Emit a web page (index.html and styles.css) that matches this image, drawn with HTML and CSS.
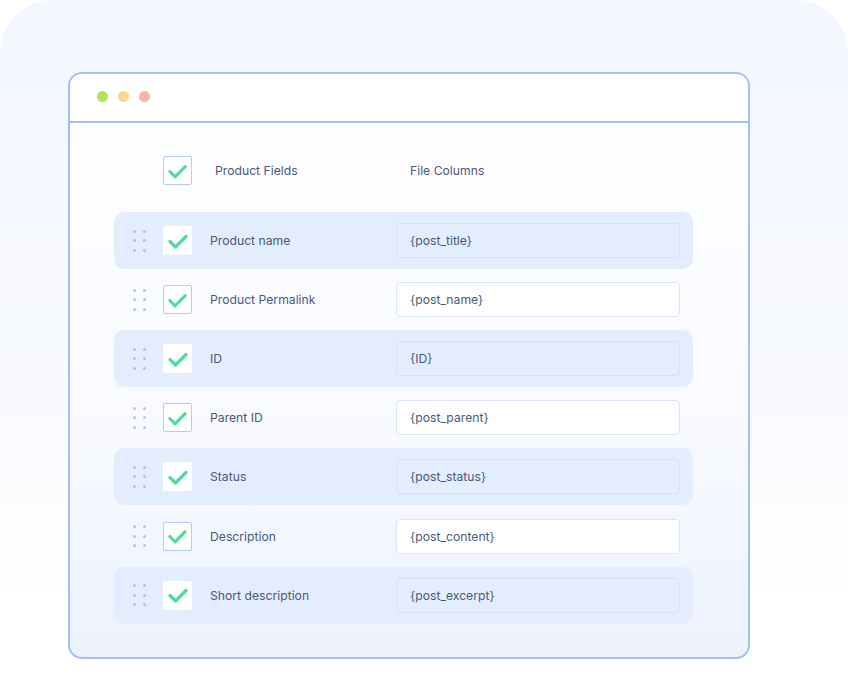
FILE: index.html
```html
<!DOCTYPE html>
<html lang="en">
<head>
    <meta charset="UTF-8">
    <meta name="viewport" content="width=device-width, initial-scale=1.0">
    <title>Field Mapping</title>
    <link rel="stylesheet" href="styles.css">
</head>
<body>

<div class="backdrop">
    <div class="window">
        <div class="titlebar">
            <span class="dot green"></span>
            <span class="dot yellow"></span>
            <span class="dot red"></span>
        </div>

        <div class="mapping">
            <div class="head-row">
                <span class="check boxed">
                    <svg viewBox="0 0 28 28"><path d="M6 14.5l5.5 5.5L22 9.5"/></svg>
                </span>
                <span class="head-label">Product Fields</span>
                <span class="head-col">File Columns</span>
            </div>

            <div class="rows" id="rows"></div>
        </div>
    </div>
</div>

<script>
    // Product fields and the file column each one maps to
    const fields = [
        ['Product name', '{post_title}'],
        ['Product Permalink', '{post_name}'],
        ['ID', '{ID}'],
        ['Parent ID', '{post_parent}'],
        ['Status', '{post_status}'],
        ['Description', '{post_content}'],
        ['Short description', '{post_excerpt}']
    ];

    const rows = document.getElementById('rows');
    fields.forEach(function(field, i) {
        const row = document.createElement('div');
        row.className = 'row' + (i % 2 === 0 ? ' shaded' : '');
        row.innerHTML = `
            <span class="grip"><i></i><i></i><i></i><i></i><i></i><i></i></span>
            <span class="check ${i % 2 === 0 ? '' : 'boxed'}">
                <svg viewBox="0 0 28 28"><path d="M6 14.5l5.5 5.5L22 9.5"/></svg>
            </span>
            <span class="field">${field[0]}</span>
            <span class="column">${field[1]}</span>
        `;
        rows.appendChild(row);
    });
</script>
</body>
</html>
```

FILE: styles.css
```css
/* Page and soft backdrop panel */
body {
    margin: 0;
    background: #fff;
    font-family: Inter, "Noto Sans", sans-serif;
    color: #4d5877;
}
.backdrop {
    width: 848px;
    height: 678px;
    padding: 72px 0 0 68px;
    box-sizing: border-box;
    border-radius: 52px 52px 0 0;
    background: linear-gradient(180deg, #f4f8fe 0%, #f7f9fe 55%, #ffffff 88%);
}

/* Browser-like window */
.window {
    width: 682px;
    height: 587px;
    box-sizing: border-box;
    border: 2px solid #a2c0f7;
    border-radius: 14px;
    overflow: hidden;
    background: linear-gradient(180deg, #ffffff 0%, #f8faff 60%, #edf2fd 100%);
}
.titlebar {
    height: 49px;
    display: flex;
    align-items: center;
    gap: 10px;
    padding: 0 0 3px 27px;
    box-sizing: border-box;
    border-bottom: 2px solid #a2c0f7;
    background: #fff;
}
.dot {
    width: 11px;
    height: 11px;
    border-radius: 50%;
}
.dot.green { background: #b3e45c; }
.dot.yellow { background: #f6d88e; }
.dot.red { background: #fbb4a6; }

/* Mapping table */
.mapping {
    padding: 33px 55px 0 44px;
}
.head-row {
    display: flex;
    align-items: center;
    height: 29px;
    font-size: 12.2px;
}
.head-row .check {
    margin-left: 49px;
}
.head-label {
    margin-left: 23px;
    width: 195px;
}
.rows {
    margin-top: 27px;
    display: flex;
    flex-direction: column;
    gap: 2px;
}
.row {
    display: flex;
    align-items: center;
    height: 57.1px;
    padding: 0 13px 0 19px;
    border-radius: 10px;
    font-size: 12.2px;
}
.row.shaded {
    background: #e3edfd;
}
.grip {
    display: grid;
    grid-template-columns: 3px 3px;
    column-gap: 7px;
    row-gap: 6.5px;
    width: 30px;
}
.grip i {
    width: 3px;
    height: 3px;
    border-radius: 50%;
    background: #b0c3e8;
}
.check {
    width: 29px;
    height: 29px;
    box-sizing: border-box;
    background: #fff;
    display: flex;
    align-items: center;
    justify-content: center;
    border-radius: 2px;
}
.check.boxed {
    border: 1px solid #b5cbf6;
}
.check svg {
    width: 28px;
    height: 28px;
    fill: none;
    stroke: #4fdc9c;
    stroke-width: 3.2;
    stroke-linecap: round;
    stroke-linejoin: round;
}
.field {
    margin-left: 18px;
    width: 186px;
}
.column {
    width: 284px;
    height: 35px;
    box-sizing: border-box;
    padding-left: 13px;
    display: flex;
    align-items: center;
    border: 1px solid #dbe6fb;
    border-radius: 4px;
    background: #fff;
}
.row.shaded .column {
    background: #e3edfd;
    border-color: #d4e1f9;
}
```
